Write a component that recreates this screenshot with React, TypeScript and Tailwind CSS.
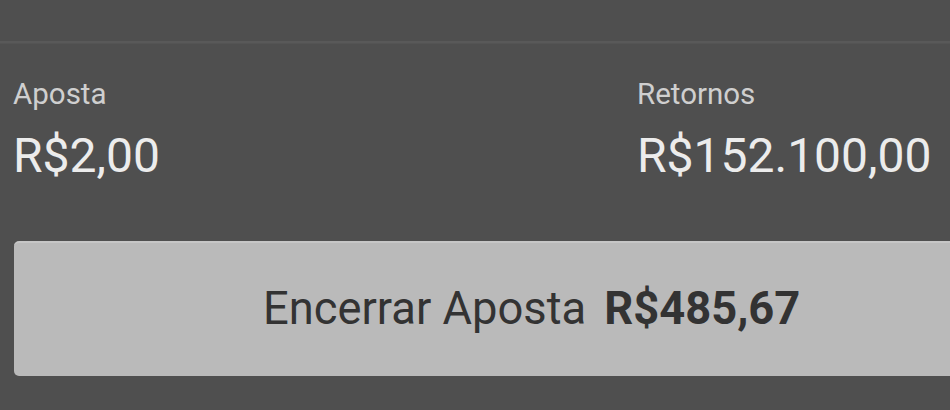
import React from "react";

export default function App() {
  return (
    <div
      className="w-[950px] h-[410px] overflow-hidden bg-[#4f4f4f] flex flex-col"
      style={{ fontFamily: "Roboto, 'Noto Sans', sans-serif" }}
    >
      <div className="h-[41px] flex-none" />
      <div className="h-[3px] flex-none bg-[#595959] border-b border-[#545454]" />
      <div className="flex pl-[13px] pt-[33px]">
        <div className="w-[624px] flex flex-col">
          <span className="text-[29.5px] leading-[34px] text-[#cfcfcf]">Aposta</span>
          <span className="mt-[17px] text-[48px] leading-[56px] text-[#ececec]">R$2,00</span>
        </div>
        <div className="flex flex-col">
          <span className="text-[29.5px] leading-[34px] text-[#cfcfcf]">Retornos</span>
          <span className="mt-[17px] text-[48px] leading-[56px] text-[#ececec] whitespace-nowrap">R$152.100,00</span>
        </div>
      </div>
      <div className="pl-[14px] mt-[57px]">
        <div className="w-[960px] h-[135px] rounded-[5px] bg-[#bababa] border-t-2 border-[#c6c6c6] flex items-center pb-[2px] pl-[249px] text-[#333333] text-[45.3px] whitespace-nowrap">
          <span>Encerrar Aposta</span>
          <span className="ml-[18px] font-bold">R$485,67</span>
        </div>
      </div>
    </div>
  );
}
